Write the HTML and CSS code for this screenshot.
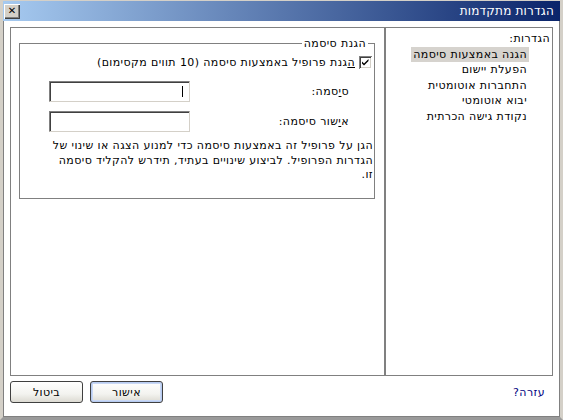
FILE: index.html
```html
<!DOCTYPE html>
<html dir="rtl" lang="he">
<head>
<meta charset="utf-8">
<link rel="stylesheet" href="styles.css">
</head>
<body>
<div class="window">
  <div class="titlebar">
    <span class="title">הגדרות מתקדמות</span>
    <span class="close">✕</span>
  </div>
  <div class="client">
    <div class="main">
      <div class="list-pane">
        <div class="list-head">הגדרות:</div>
        <ul class="list">
          <li><span class="item selected">הגנה באמצעות סיסמה</span></li>
          <li><span class="item">הפעלת יישום</span></li>
          <li><span class="item">התחברות אוטומטית</span></li>
          <li><span class="item">יבוא אוטומטי</span></li>
          <li><span class="item">נקודת גישה הכרתית</span></li>
        </ul>
      </div>
      <div class="content-pane">
        <fieldset class="group">
          <legend class="legend">הגנת סיסמה</legend>
          <div class="check-row">
            <svg class="checkbox" width="13" height="13" viewBox="0 0 13 13">
              <rect x="0" y="0" width="13" height="13" fill="#808080"/>
              <rect x="1" y="1" width="12" height="12" fill="#ffffff"/>
              <rect x="1" y="1" width="11" height="11" fill="#404040"/>
              <rect x="2" y="2" width="10" height="10" fill="#d4d0c8"/>
              <rect x="2" y="2" width="9" height="9" fill="#ffffff"/>
              <path d="M3 5.5 L5 7.5 L9.5 3 L9.5 5 L5 9.5 L3 7.5 Z" fill="#000"/>
            </svg>
            <span class="check-label"><u>ה</u>גנת פרופיל באמצעות סיסמה (10 תווים מקסימום)</span>
          </div>
          <div class="field-row">
            <span class="field-label">ס<u>י</u>סמה:</span>
            <span class="input"><span class="caret"></span></span>
          </div>
          <div class="field-row">
            <span class="field-label">א<u>י</u>שור סיסמה:</span>
            <span class="input"></span>
          </div>
          <p class="note">הגן על פרופיל זה באמצעות סיסמה כדי למנוע הצגה או שינוי של<br>הגדרות הפרופיל. לביצוע שינויים בעתיד, תידרש להקליד סיסמה<br>זו.</p>
        </fieldset>
      </div>
    </div>
    <div class="footer">
      <span class="help">עזרה?</span>
      <div class="buttons">
        <span class="btn btn-default">אישור</span>
        <span class="btn">ביטול</span>
      </div>
    </div>
  </div>
</div>
</body>
</html>
```
FILE: styles.css
```css
* { box-sizing: border-box; }
html, body {
  margin: 0;
  padding: 0;
  width: 563px;
  height: 420px;
  overflow: hidden;
  background: #ffffff;
}
body {
  font-family: "DejaVu Sans", sans-serif;
  font-size: 11px;
  letter-spacing: 0.4px;
  color: #000;
}
.window {
  width: 563px;
  height: 420px;
  display: flex;
  flex-direction: column;
  border-top: 1px solid #d4d0c8;
}
.titlebar {
  height: 20px;
  flex: none;
  display: flex;
  align-items: center;
  justify-content: space-between;
  padding: 0 6px 0 4px;
  background: linear-gradient(to right, #a6caf0, #0a246a);
  border-left: 3px solid #d4d0c8;
  border-right: 3px solid #d4d0c8;
}
.title {
  color: #fff;
  font-size: 12px;
  letter-spacing: 0.2px;
  line-height: 14px;
}
.close {
  width: 16px;
  height: 15px;
  background: #d4d0c8;
  box-shadow: inset 1px 1px 0 #fff, inset -1px -1px 0 #404040, inset -2px -2px 0 #808080;
  font-size: 10px;
  font-weight: bold;
  letter-spacing: 0;
  line-height: 14px;
  text-align: center;
  color: #000;
  margin-left: -3px;
}
.client {
  flex: 1;
  display: flex;
  flex-direction: column;
  padding: 6px 7px 9px 7px;
  border-left: 3px solid #d4d0c8;
  border-right: 3px solid #d4d0c8;
  border-bottom: 3px solid #9a9a9a;
  box-shadow: inset 1px 0 0 #808080, inset -1px 0 0 #808080, inset 0 -1px 0 #808080;
}
.main {
  height: 349px;
  flex: none;
  display: flex;
  border: 1px solid #808080;
}
.list-pane {
  width: 166px;
  flex: none;
  padding: 3px 2px 0 0;
  line-height: 15.5px;
}
.list {
  list-style: none;
  margin: 0;
  padding: 0 21px 0 0;
}
.item {
  padding: 1px 2px;
}
.item.selected {
  background: #d6d3ce;
}
.content-pane {
  flex: 1;
  border-right: 2px solid #808080;
  padding: 9px 9px 0 8px;
}
.group {
  margin: 0;
  min-width: 0;
  border: 1px solid #808080;
  padding: 0;
  height: 162px;
}
.legend {
  padding: 0 2px;
  margin-right: 6px;
  line-height: 13px;
}
.check-row {
  display: flex;
  align-items: center;
  gap: 4px;
  margin-top: 6px;
  padding-right: 2px;
}
.checkbox { flex: none; }
.field-row {
  display: flex;
  align-items: center;
  height: 21px;
  margin-top: 12px;
  padding-right: 25px;
}
.field-row + .field-row { margin-top: 9px; }
.field-label {
  flex: 1;
}
.input {
  width: 141px;
  height: 21px;
  flex: none;
  margin-left: 29px;
  background: #fff;
  border-top: 1px solid #808080;
  border-left: 1px solid #808080;
  border-right: 1px solid #d4d0c8;
  border-bottom: 1px solid #d4d0c8;
  box-shadow: inset 1px 1px 0 #404040;
  display: flex;
  align-items: center;
  padding-right: 6px;
}
.caret {
  width: 1px;
  height: 11px;
  background: #000;
}
.note {
  margin: 7px 0 0 0;
  padding-right: 1px;
  line-height: 14.5px;
  white-space: nowrap;
}
.footer {
  flex: 1;
  display: flex;
  align-items: center;
  justify-content: space-between;
  padding-right: 8px;
}
.help {
  color: #000080;
}
.buttons {
  display: flex;
  gap: 7px;
}
.btn {
  width: 73px;
  height: 22px;
  display: flex;
  align-items: center;
  justify-content: center;
  border: 1px solid #404040;
  border-radius: 3px;
  background: linear-gradient(#ffffff, #f3f3ef 60%, #dcdad2);
}
.btn-default {
  box-shadow: inset 0 0 0 1px #b7cbf0, inset 0 0 0 2px #c9d8f5;
}
```
